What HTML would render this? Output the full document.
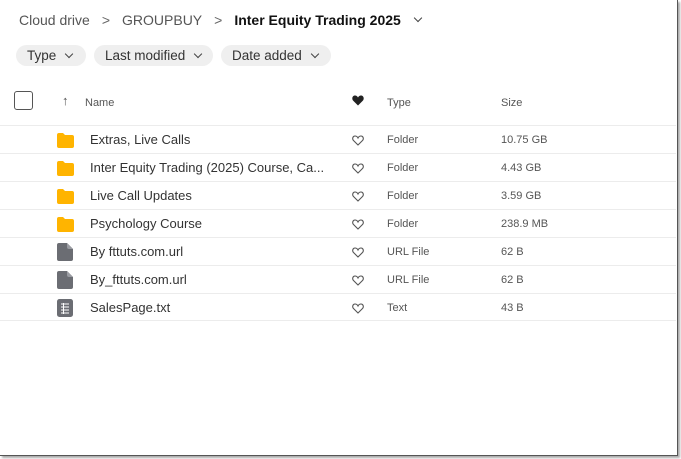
<!DOCTYPE html>
<html><head><meta charset="utf-8"><style>
*{margin:0;padding:0;box-sizing:border-box}
body{width:681px;height:459px;background:#fff;font-family:"Liberation Sans",sans-serif;position:relative;overflow:hidden;color:#222}
.frame{position:absolute;left:0;top:0;width:678px;height:456px;border-right:1px solid #555;border-bottom:1px solid #555;box-shadow:2px 2px 2px #aaa}
.bc{position:absolute;top:12px;left:19px;font-size:14px;color:#555;display:flex;align-items:center;white-space:nowrap}
.bc b{color:#111;font-weight:bold}
.sep{margin:0 12px;color:#666}
.pill{position:absolute;top:45px;height:21px;background:#efefef;border-radius:11px;font-size:13.5px;color:#333;display:flex;align-items:center;padding-left:11px}
.chev{display:inline-block;width:6px;height:6px;border-right:1.3px solid #444;border-bottom:1.3px solid #444;transform:rotate(45deg);margin-left:10px;margin-top:-4px}
.hd{position:absolute;top:97px;font-size:11px;color:#555}
.row{position:absolute;left:0;width:676px;height:28px;border-top:1px solid #ececec}
.row .n{position:absolute;left:90px;top:6px;font-size:13px;color:#333}
.row .t{position:absolute;left:387px;top:8px;font-size:11px;color:#555}
.row .s{position:absolute;left:501px;top:8px;font-size:11px;color:#555}
.row svg.i{position:absolute;left:57px;top:6px}
.row svg.h{position:absolute;left:352px;top:9px}
</style></head><body>
<div class="frame"></div>
<div class="bc">Cloud drive<span class="sep">&gt;</span>GROUPBUY<span class="sep">&gt;</span><b>Inter Equity Trading 2025</b><span class="chev" style="margin-left:14px"></span></div>
<div class="pill" style="left:16px;width:70px">Type<span class="chev"></span></div>
<div class="pill" style="left:94px;width:119px">Last modified<span class="chev"></span></div>
<div class="pill" style="left:221px;width:110px">Date added<span class="chev"></span></div>
<div style="position:absolute;left:14px;top:91px;width:19px;height:19px;border:1.5px solid #555;border-radius:3px"></div>
<div class="hd" style="left:62px;font-size:13px;top:93px">↑</div>
<div class="hd" style="left:85px">Name</div>
<svg style="position:absolute;left:352px;top:95px" width="12" height="11" viewBox="0 0 12 11"><path d="M6 10.5L1 5.5C-0.5 3.5 0.5 0.5 3 0.5 4.5 0.5 5.5 1.5 6 2.5 6.5 1.5 7.5 0.5 9 0.5 11.5 0.5 12.5 3.5 11 5.5Z" fill="#222"/></svg>
<div class="hd" style="left:387px">Type</div>
<div class="hd" style="left:501px">Size</div>

<div class="row" style="top:125px"><svg class="i" width="17" height="16"><path d="M0 3Q0 1 2 1H6L8 3H15Q17 3 17 5V14Q17 16 15 16H2Q0 16 0 14Z" fill="#ffb400"/></svg><span class="n">Extras, Live Calls</span><svg class="h" width="12" height="11" viewBox="0 0 12 11"><path d="M6 10L1.5 5.5C0 4 0.7 1 3 1 4.5 1 5.5 2 6 3 6.5 2 7.5 1 9 1 11.3 1 12 4 10.5 5.5Z" fill="none" stroke="#555" stroke-width="1.1"/></svg><span class="t">Folder</span><span class="s">10.75 GB</span></div>
<div class="row" style="top:153px"><svg class="i" width="17" height="16"><path d="M0 3Q0 1 2 1H6L8 3H15Q17 3 17 5V14Q17 16 15 16H2Q0 16 0 14Z" fill="#ffb400"/></svg><span class="n">Inter Equity Trading (2025) Course, Ca...</span><svg class="h" width="12" height="11" viewBox="0 0 12 11"><path d="M6 10L1.5 5.5C0 4 0.7 1 3 1 4.5 1 5.5 2 6 3 6.5 2 7.5 1 9 1 11.3 1 12 4 10.5 5.5Z" fill="none" stroke="#555" stroke-width="1.1"/></svg><span class="t">Folder</span><span class="s">4.43 GB</span></div>
<div class="row" style="top:181px"><svg class="i" width="17" height="16"><path d="M0 3Q0 1 2 1H6L8 3H15Q17 3 17 5V14Q17 16 15 16H2Q0 16 0 14Z" fill="#ffb400"/></svg><span class="n">Live Call Updates</span><svg class="h" width="12" height="11" viewBox="0 0 12 11"><path d="M6 10L1.5 5.5C0 4 0.7 1 3 1 4.5 1 5.5 2 6 3 6.5 2 7.5 1 9 1 11.3 1 12 4 10.5 5.5Z" fill="none" stroke="#555" stroke-width="1.1"/></svg><span class="t">Folder</span><span class="s">3.59 GB</span></div>
<div class="row" style="top:209px"><svg class="i" width="17" height="16"><path d="M0 3Q0 1 2 1H6L8 3H15Q17 3 17 5V14Q17 16 15 16H2Q0 16 0 14Z" fill="#ffb400"/></svg><span class="n">Psychology Course</span><svg class="h" width="12" height="11" viewBox="0 0 12 11"><path d="M6 10L1.5 5.5C0 4 0.7 1 3 1 4.5 1 5.5 2 6 3 6.5 2 7.5 1 9 1 11.3 1 12 4 10.5 5.5Z" fill="none" stroke="#555" stroke-width="1.1"/></svg><span class="t">Folder</span><span class="s">238.9 MB</span></div>
<div class="row" style="top:237px"><svg class="i" width="16" height="18" style="top:5px"><path d="M0 2Q0 0 2 0H10L16 6V16Q16 18 14 18H2Q0 18 0 16Z" fill="#6b6d73"/><path d="M10 0V4Q10 6 12 6H16Z" fill="#9a9ca2"/></svg><span class="n">By fttuts.com.url</span><svg class="h" width="12" height="11" viewBox="0 0 12 11"><path d="M6 10L1.5 5.5C0 4 0.7 1 3 1 4.5 1 5.5 2 6 3 6.5 2 7.5 1 9 1 11.3 1 12 4 10.5 5.5Z" fill="none" stroke="#555" stroke-width="1.1"/></svg><span class="t">URL File</span><span class="s">62 B</span></div>
<div class="row" style="top:265px"><svg class="i" width="16" height="18" style="top:5px"><path d="M0 2Q0 0 2 0H10L16 6V16Q16 18 14 18H2Q0 18 0 16Z" fill="#6b6d73"/><path d="M10 0V4Q10 6 12 6H16Z" fill="#9a9ca2"/></svg><span class="n">By_fttuts.com.url</span><svg class="h" width="12" height="11" viewBox="0 0 12 11"><path d="M6 10L1.5 5.5C0 4 0.7 1 3 1 4.5 1 5.5 2 6 3 6.5 2 7.5 1 9 1 11.3 1 12 4 10.5 5.5Z" fill="none" stroke="#555" stroke-width="1.1"/></svg><span class="t">URL File</span><span class="s">62 B</span></div>
<div class="row" style="top:293px;border-bottom:1px solid #ececec"><svg class="i" width="16" height="18" style="top:5px"><rect width="16" height="18" rx="2.5" fill="#6b6d73"/><g stroke="#fff" stroke-width="1"><line x1="4" y1="5" x2="12" y2="5"/><line x1="4" y1="8" x2="12" y2="8"/><line x1="4" y1="11" x2="12" y2="11"/><line x1="4" y1="14" x2="12" y2="14"/><line x1="6.5" y1="4" x2="6.5" y2="15"/></g></svg><span class="n">SalesPage.txt</span><svg class="h" width="12" height="11" viewBox="0 0 12 11"><path d="M6 10L1.5 5.5C0 4 0.7 1 3 1 4.5 1 5.5 2 6 3 6.5 2 7.5 1 9 1 11.3 1 12 4 10.5 5.5Z" fill="none" stroke="#555" stroke-width="1.1"/></svg><span class="t">Text</span><span class="s">43 B</span></div>
</body></html>
